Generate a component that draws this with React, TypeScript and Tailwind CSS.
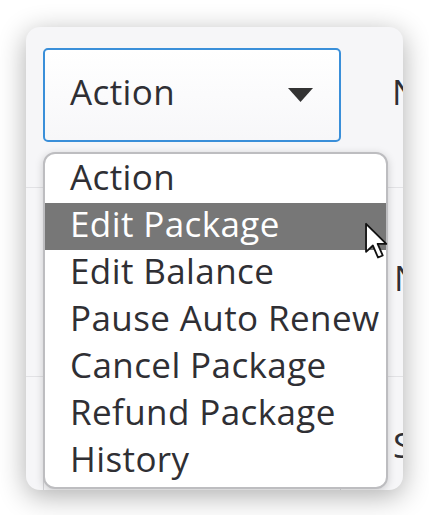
import { useState } from 'react';

const ACTIONS = [
  'Action',
  'Edit Package',
  'Edit Balance',
  'Pause Auto Renew',
  'Cancel Package',
  'Refund Package',
  'History',
];

function Caret() {
  return (
    <svg width="25" height="14" viewBox="0 0 25 14" className="shrink-0">
      <path d="M0 0 H25 L12.5 14 Z" fill="#333" />
    </svg>
  );
}

function Pointer() {
  return (
    <svg
      width="24"
      height="38"
      viewBox="0 0 13 21"
      className="pointer-events-none absolute left-[338px] top-[195px]"
    >
      <path
        d="M1 1 L1 16.5 L4.8 13 L7.6 19.6 L10.2 18.5 L7.4 12.1 L12.2 12.1 Z"
        fill="#fff"
        stroke="#111"
        strokeWidth="1"
        strokeLinejoin="round"
      />
    </svg>
  );
}

export default function App() {
  const [hovered] = useState(1);

  return (
    <div className="h-[515px] w-[429px] bg-white pl-[26px] pt-[27px] font-['Open_Sans',sans-serif] tracking-[0.4px] text-[#2f2f34]">
      <div className="relative flex h-[463px] w-[377px] flex-col overflow-hidden rounded-[14px] bg-[#f6f6f8] shadow-[0_6px_28px_rgba(0,0,0,0.32)]">
        {/* first row: the action select */}
        <div className="flex h-[160px] shrink-0 items-start pl-[17px] pt-[21px]">
          <div className="flex h-[94px] w-[298px] shrink-0 items-center justify-between rounded-[5px] border-2 border-[#3a8fd9] bg-gradient-to-b from-white to-[#f7f7f9] pl-[25px] pr-[26px] text-[35px]">
            <span className="pb-[6px]">Action</span>
            <Caret />
          </div>
          <div className="flex h-[94px] items-center pb-[6px] pl-[51px] text-[35px]">N</div>
        </div>
        <div className="h-px shrink-0 bg-[#e2e2e5]" />

        <div className="flex h-[188px] shrink-0 items-center pb-[8px] pl-[368px] text-[35px]">N</div>
        <div className="h-px shrink-0 bg-[#e2e2e5]" />

        <div className="grid flex-1 grid-cols-[17px_298px_1fr]">
          <div />
          <div className="border-x border-[#d6d6d9]" />
          <div className="pl-[52px] pt-[50px] text-[35px] leading-none">S</div>
        </div>

        {/* open dropdown list */}
        <ul className="absolute left-[17px] top-[125px] w-[345px] overflow-hidden rounded-[12px] border-2 border-[#bdbdc0] bg-white py-[2px] shadow-[0_2px_8px_rgba(0,0,0,0.18)]">
          {ACTIONS.map((label, i) => (
            <li
              key={label}
              className={
                i === hovered
                  ? 'flex h-[47px] items-center whitespace-nowrap bg-[#777777] pb-[4px] pl-[25px] text-[35px] text-white'
                  : 'flex h-[47px] items-center whitespace-nowrap pb-[4px] pl-[25px] text-[35px]'
              }
            >
              {label}
            </li>
          ))}
        </ul>

        <Pointer />
      </div>
    </div>
  );
}
